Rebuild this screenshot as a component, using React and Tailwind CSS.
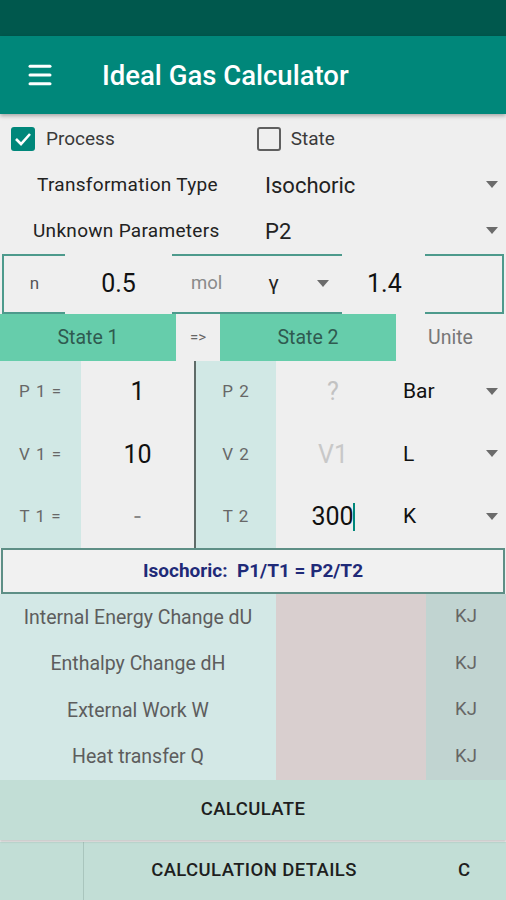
import { Menu } from 'lucide-react'

const Caret = () => (
  <svg width="12" height="8" viewBox="0 0 12 8" className="shrink-0">
    <path d="M0 0 L12 0 L6 7 Z" fill="#6b6b6b" />
  </svg>
)

function Dropdown({ value, className = '' }) {
  return (
    <div className={`flex items-center justify-between pr-2 ${className}`}>
      <span>{value}</span>
      <Caret />
    </div>
  )
}

const rows1 = [
  { l: 'P 1 =', v: '1', vc: 'text-[#111]' },
  { l: 'V 1 =', v: '10', vc: 'text-[#111]' },
  { l: 'T 1 =', v: '-', vc: 'text-[#8a8a8a] text-[18px]' },
]
const rows2 = [
  { l: 'P 2', v: '?', vc: 'text-[#c2c2c2]', u: 'Bar' },
  { l: 'V 2', v: 'V1', vc: 'text-[#c8c8c8]', u: 'L' },
  { l: 'T 2', v: '300', vc: 'text-[#111]', u: 'K', cursor: true },
]
const results = ['Internal Energy Change dU', 'Enthalpy Change dH', 'External Work W', 'Heat transfer Q']

export default function App() {
  return (
    <div className="w-[506px] h-[900px] bg-[#efefef] overflow-hidden flex flex-col" style={{ fontFamily: 'Roboto, "Liberation Sans", sans-serif' }}>
      <div className="h-[36px] bg-[#00584d]" />
      <div className="h-[78px] bg-[#00877a] flex items-center shadow-[0_2px_4px_rgba(0,0,0,0.3)] relative z-10">
        <Menu className="ml-[25px] text-white" size={30} strokeWidth={2.4} />
        <span className="ml-[47px] pt-[2px] text-white text-[27.5px] font-medium">Ideal Gas Calculator</span>
      </div>

      {/* checkboxes */}
      <div className="h-[46px] flex items-center text-[19px] text-[#3a3a3a] mt-[2px]">
        <div className="ml-[11px] w-[24px] h-[24px] rounded-[3px] bg-[#00877a] flex items-center justify-center">
          <svg width="18" height="14" viewBox="0 0 18 14">
            <path d="M2 7 L7 12 L16 2" stroke="white" strokeWidth="2.6" fill="none" />
          </svg>
        </div>
        <span className="ml-[11px]">Process</span>
        <div className="ml-[142px] w-[24px] h-[24px] rounded-[3px] border-2 border-[#5f5f5f]" />
        <span className="ml-[10px]">State</span>
      </div>

      {/* spinners */}
      <div className="h-[46px] flex items-center text-[#222]">
        <span className="w-[265px] pl-[37px] text-[19px] tracking-[0.3px]">Transformation Type</span>
        <Dropdown value="Isochoric" className="flex-1 text-[22px] pr-[8px]" />
      </div>
      <div className="h-[46px] flex items-center text-[#222]">
        <span className="w-[265px] pl-[33px] text-[19px] tracking-[0.3px]">Unknown Parameters</span>
        <Dropdown value="P2" className="flex-1 text-[22px] pr-[8px]" />
      </div>

      {/* n row */}
      <div className="h-[60px] flex px-[2px]">
        <div className="w-[63px] border-y-2 border-l-2 border-[#4d9a8c] flex items-center justify-center text-[17px] text-[#555]">n</div>
        <div className="w-[107px] flex items-center justify-center text-[25px] text-[#111]">0.5</div>
        <div className="w-[170px] border-y-2 border-[#4d9a8c] flex items-center">
          <span className="ml-[19px] text-[18.5px] text-[#8a8a8a]">mol</span>
          <span className="ml-[46px] text-[21px] text-[#222]">γ</span>
          <span className="ml-[38px]"><Caret /></span>
        </div>
        <div className="w-[83px] flex items-center pl-[25px] text-[25px] text-[#111]">1.4</div>
        <div className="flex-1 border-y-2 border-r-2 border-[#4d9a8c]" />
      </div>

      {/* state header */}
      <div className="h-[47px] flex text-[19.5px]">
        <div className="w-[176px] bg-[#66cdab] flex items-center justify-center text-[#2f5a50]">State 1</div>
        <div className="w-[44px] flex items-center justify-center text-[15px] text-[#666]">=&gt;</div>
        <div className="w-[176px] bg-[#66cdab] flex items-center justify-center text-[#2f5a50]">State 2</div>
        <div className="flex-1 flex items-center justify-center text-[#777] pr-[1px]">Unite</div>
      </div>

      {/* grid */}
      <div className="h-[187px] flex">
        <div className="w-[194px] flex flex-col">
          {rows1.map(r => (
            <div key={r.l} className="flex-1 flex">
              <div className="w-[81px] bg-[#d1e8e5] flex items-center justify-center text-[17px] text-[#676767] tracking-[1px]">{r.l}</div>
              <div className={`flex-1 flex items-center justify-center text-[25px] ${r.vc}`}>{r.v}</div>
            </div>
          ))}
        </div>
        <div className="w-[2px] bg-[#5f6b68]" />
        <div className="flex-1 flex flex-col">
          {rows2.map(r => (
            <div key={r.l} className="flex-1 flex">
              <div className="w-[80px] bg-[#d1e8e5] flex items-center justify-center text-[17px] text-[#676767] tracking-[1px]">{r.l}</div>
              <div className={`w-[114px] flex items-center justify-center text-[25px] ${r.vc}`}>
                <span>{r.v}</span>
                {r.cursor && <span className="w-[2px] h-[28px] bg-[#00877a] ml-[-1px]" />}
              </div>
              <Dropdown value={r.u} className="flex-1 text-[21px] text-[#111] pl-[13px]" />
            </div>
          ))}
        </div>
      </div>

      {/* formula */}
      <div className="h-[46px] border-2 border-[#5e8f86] bg-[#f1f1f1] flex items-center justify-center text-[19px] font-bold text-[#1f2a78] mx-[1px]">
        Isochoric:&nbsp; P1/T1 = P2/T2
      </div>

      {/* results */}
      <div className="h-[186px] flex">
        <div className="w-[276px] bg-[#d3e8e6] flex flex-col">
          {results.map(t => (
            <div key={t} className="flex-1 flex items-center justify-center text-[19.5px] text-[#5d5d5d]">{t}</div>
          ))}
        </div>
        <div className="w-[150px] bg-[#d9cfcf]" />
        <div className="flex-1 bg-[#c1d4d1] flex flex-col">
          {results.map(t => (
            <div key={t} className="flex-1 flex items-center justify-center text-[18.5px] text-[#666]">KJ</div>
          ))}
        </div>
      </div>

      {/* buttons */}
      <div className="h-[60px] bg-[#c2ded6] flex items-center justify-center text-[18.5px] font-medium text-[#1e1e1e] tracking-[0.4px] shadow-[0_2px_2px_rgba(0,0,0,0.15)] relative">
        CALCULATE
      </div>
      <div className="flex-1 bg-[#c2ded6] flex mt-[2px]">
        <div className="w-[84px] border-r border-[#a9c5bd]" />
        <div className="w-[340px] flex items-center justify-center text-[18.5px] font-medium text-[#1e1e1e] tracking-[0.4px]">CALCULATION DETAILS</div>
        <div className="flex-1 flex items-center justify-center text-[18.5px] font-medium text-[#1e1e1e] pr-[2px]">C</div>
      </div>
    </div>
  )
}
